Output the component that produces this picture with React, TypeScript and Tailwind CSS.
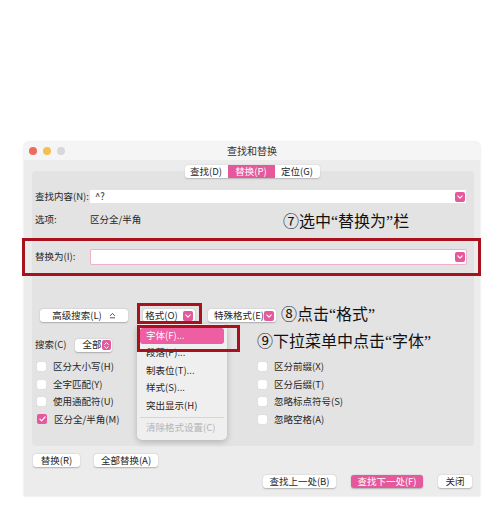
import type { ReactNode } from "react";

// 查找和替换 对话框截图复刻（带教程标注）

function PinkDown({ className = "" }: { className?: string }) {
  return (
    <span
      className={`flex h-[10px] w-[10px] shrink-0 items-center justify-center rounded-[2px] bg-[#e6589c] ${className}`}
    >
      <svg width="6" height="4" viewBox="0 0 6 4" fill="none">
        <path d="M0.8 0.9 3 3.1 5.2 0.9" stroke="white" strokeWidth="1.1" strokeLinecap="round" strokeLinejoin="round" />
      </svg>
    </span>
  );
}

function PinkStepper() {
  return (
    <span className="flex h-[10px] w-[9px] shrink-0 flex-col items-center justify-center gap-[1px] rounded-[2px] bg-[#e6589c]">
      <svg width="5" height="3" viewBox="0 0 5 3" fill="none">
        <path d="M0.7 2.4 2.5 0.7 4.3 2.4" stroke="white" strokeWidth="1" strokeLinecap="round" />
      </svg>
      <svg width="5" height="3" viewBox="0 0 5 3" fill="none">
        <path d="M0.7 0.6 2.5 2.3 4.3 0.6" stroke="white" strokeWidth="1" strokeLinecap="round" />
      </svg>
    </span>
  );
}

function Btn({
  children,
  className = "",
  primary = false,
}: {
  children: ReactNode;
  className?: string;
  primary?: boolean;
}) {
  return (
    <div
      className={`flex h-[13px] items-center justify-center whitespace-nowrap rounded-[3px] shadow-[0_0.5px_1.5px_rgba(0,0,0,0.25)] ${
        primary ? "bg-[#e6589c] text-white" : "bg-white"
      } ${className}`}
    >
      {children}
    </div>
  );
}

function Check({ label, checked = false }: { label: string; checked?: boolean }) {
  return (
    <div className="flex h-[17.5px] items-center gap-[7px]">
      {checked ? (
        <span className="flex h-[10px] w-[10px] items-center justify-center rounded-[2px] bg-[#e6589c]">
          <svg width="7" height="6" viewBox="0 0 7 6" fill="none">
            <path d="M0.9 3.1 2.7 4.9 6.1 0.9" stroke="white" strokeWidth="1.2" strokeLinecap="round" strokeLinejoin="round" />
          </svg>
        </span>
      ) : (
        <span className="h-[9px] w-[9px] rounded-[2px] bg-white shadow-[0_0_1px_rgba(0,0,0,0.15)]" />
      )}
      <span>{label}</span>
    </div>
  );
}

const note =
  "absolute whitespace-nowrap text-[16px] leading-none text-[#111] font-['Liberation_Serif','Noto_Sans_CJK_SC',serif]";
const redBox = "absolute border-[3px] border-[#a8121c]";

export default function App() {
  return (
    <div className="relative h-[532px] w-[500px] overflow-hidden bg-white font-['Noto_Sans_CJK_SC','Noto_Sans',sans-serif] text-[9.5px] leading-none text-[#262626]">
      <div className="ml-[24px] mt-[142px] h-[354px] w-[456px] overflow-hidden rounded-t-[5px] bg-[#ececec] shadow-[0_0_2px_rgba(0,0,0,0.18)]">
        {/* 标题栏 */}
        <div className="grid h-[18px] grid-cols-[1fr_auto_1fr] items-center bg-[#f5f5f5]">
          <div className="flex items-center gap-[6px] pl-[5px]">
            <span className="h-[8px] w-[8px] rounded-full bg-[#ec6a5e]" />
            <span className="h-[8px] w-[8px] rounded-full bg-[#f4bf4f]" />
            <span className="h-[8px] w-[8px] rounded-full bg-[#d8d8dc]" />
          </div>
          <span className="text-[10px] text-[#333]">查找和替换</span>
          <span />
        </div>

        {/* 标签页 */}
        <div className="relative z-10 -mb-[7px] mt-[5px] flex h-[13px] justify-center">
          <div className="flex overflow-hidden rounded-[3px] bg-white shadow-[0_0.5px_1.5px_rgba(0,0,0,0.2)]">
            <span className="flex w-[43px] items-center justify-center">查找(D)</span>
            <span className="flex w-[47px] items-center justify-center bg-[#e6589c] text-white">替换(P)</span>
            <span className="flex w-[45px] items-center justify-center">定位(G)</span>
          </div>
        </div>

        {/* 主面板 */}
        <div className="ml-[8px] mr-[6px] h-[275px] rounded-[4px] bg-[#e3e3e3] pt-[19px]">
          <div className="flex h-[13px] items-center">
            <span className="w-[58px] pl-[3px]">查找内容(N):</span>
            <div className="mr-[8px] flex h-[13px] flex-1 items-center bg-white pl-[5px] pr-[1px]">
              <span>^?</span>
              <PinkDown className="ml-auto" />
            </div>
          </div>

          <div className="mt-[10px] flex h-[14px] items-center">
            <span className="w-[58px] pl-[3px]">选项:</span>
            <span>区分全/半角</span>
          </div>

          <div className="mt-[22px] flex h-[16px] items-center">
            <span className="w-[58px] pl-[3px]">替换为(I):</span>
            <div className="mr-[7px] flex h-[16px] flex-1 items-center rounded-[2px] border-[1.5px] border-[#eeb0cd] bg-white pr-[1px]">
              <PinkDown className="ml-auto" />
            </div>
          </div>

          <div className="mt-[44px] flex h-[13px] items-center">
            <Btn className="ml-[8px] w-[88px] gap-[7px]">
              <span>高级搜索(L)</span>
              <svg width="7" height="7" viewBox="0 0 7 7" fill="none">
                <path d="M1.3 3.6 3.5 1.4 5.7 3.6" stroke="#444" strokeWidth="0.9" strokeLinecap="round" />
                <path d="M1.3 5.8H5.7" stroke="#444" strokeWidth="0.9" strokeLinecap="round" />
              </svg>
            </Btn>
            <Btn className="ml-[15px] w-[52px] gap-[5px]">
              <span>格式(O)</span>
              <PinkDown className="h-[9px] w-[9px]" />
            </Btn>
            <Btn className="ml-[13px] w-[68px] justify-between pl-[5px] pr-[1px]">
              <span>特殊格式(E)</span>
              <PinkDown />
            </Btn>
          </div>

          <div className="mt-[17px] flex h-[12px] items-center">
            <span className="w-[43px] pl-[3px]">搜索(C)</span>
            <Btn className="h-[11px] w-[37px] justify-between pl-[7px] pr-[1px]">
              <span>全部</span>
              <PinkStepper />
            </Btn>
          </div>

          <div className="mt-[7px] grid grid-cols-[221px_1fr] pl-[5px]">
            <Check label="区分大小写(H)" />
            <Check label="区分前缀(X)" />
            <Check label="全字匹配(Y)" />
            <Check label="区分后缀(T)" />
            <Check label="使用通配符(U)" />
            <Check label="忽略标点符号(S)" />
            <Check label="区分全/半角(M)" checked />
            <Check label="忽略空格(A)" />
          </div>
        </div>

        <div className="mt-[8px] flex h-[13px] gap-[14px] pl-[9px]">
          <Btn className="w-[47px]">替换(R)</Btn>
          <Btn className="w-[64px]">全部替换(A)</Btn>
        </div>

        <div className="mt-[8px] flex h-[13px] justify-end gap-[15px] pr-[8px]">
          <Btn className="w-[73px]">查找上一处(B)</Btn>
          <Btn className="w-[72px]" primary>
            查找下一处(F)
          </Btn>
          <Btn className="w-[34px]">关闭</Btn>
        </div>
      </div>

      {/* 格式 下拉菜单 */}
      <div className="absolute left-[137px] top-[324px] w-[90px] rounded-[5px] bg-[#efefef] px-[3px] py-[4px] shadow-[0_2px_6px_rgba(0,0,0,0.22)]">
        <div className="flex h-[16px] items-center rounded-[3px] bg-[#ee5ea3] pl-[6px] text-white">字体(F)...</div>
        <div className="flex h-[17.5px] items-center pl-[6px]">段落(P)...</div>
        <div className="flex h-[17.5px] items-center pl-[6px]">制表位(T)...</div>
        <div className="flex h-[17.5px] items-center pl-[6px]">样式(S)...</div>
        <div className="flex h-[17.5px] items-center pl-[6px]">突出显示(H)</div>
        <div className="my-[2.5px] h-px bg-[#d6d6d6]" />
        <div className="flex h-[16px] items-center pl-[6px] text-[#b5b5b5]">清除格式设置(C)</div>
      </div>

      {/* 教程标注 */}
      <div className={`${redBox} left-[22px] top-[238px] h-[38px] w-[459px]`} />
      <div className={`${redBox} left-[137px] top-[303px] h-[21px] w-[65px]`} />
      <div className={`${redBox} left-[137px] top-[325px] h-[27px] w-[103px]`} />

      <div className={`${note} left-[283px] top-[214px]`}>⑦选中“替换为”栏</div>
      <div className={`${note} left-[281px] top-[307px]`}>⑧点击“格式”</div>
      <div className={`${note} left-[257px] top-[334px]`}>⑨下拉菜单中点击“字体”</div>
    </div>
  );
}
